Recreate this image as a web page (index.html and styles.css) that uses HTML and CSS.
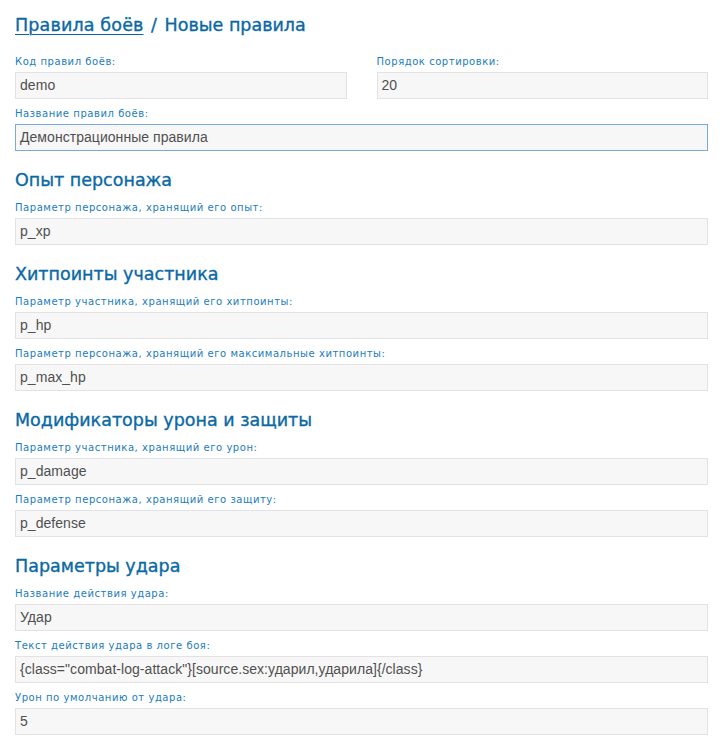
FILE: index.html
```html
<!DOCTYPE html>
<html lang="ru">
<head>
<meta charset="utf-8">
<title>Новые правила</title>
<link rel="stylesheet" href="styles.css">
</head>
<body>
<div class="page">
  <h1 class="title"><a href="#" class="crumb">Правила боёв</a> <span class="sep">/</span> Новые правила</h1>

  <div class="row">
    <div class="field">
      <label class="label">Код правил боёв:</label>
      <div class="input">demo</div>
    </div>
    <div class="field">
      <label class="label">Порядок сортировки:</label>
      <div class="input">20</div>
    </div>
  </div>
  <div class="field">
    <label class="label">Название правил боёв:</label>
    <div class="input focused">Демонстрационные правила</div>
  </div>

  <h2 class="section">Опыт персонажа</h2>
  <div class="field">
    <label class="label">Параметр персонажа, хранящий его опыт:</label>
    <div class="input">p_xp</div>
  </div>

  <h2 class="section">Хитпоинты участника</h2>
  <div class="field">
    <label class="label">Параметр участника, хранящий его хитпоинты:</label>
    <div class="input">p_hp</div>
  </div>
  <div class="field">
    <label class="label">Параметр персонажа, хранящий его максимальные хитпоинты:</label>
    <div class="input">p_max_hp</div>
  </div>

  <h2 class="section">Модификаторы урона и защиты</h2>
  <div class="field">
    <label class="label">Параметр участника, хранящий его урон:</label>
    <div class="input">p_damage</div>
  </div>
  <div class="field">
    <label class="label">Параметр персонажа, хранящий его защиту:</label>
    <div class="input">p_defense</div>
  </div>

  <h2 class="section">Параметры удара</h2>
  <div class="field">
    <label class="label">Название действия удара:</label>
    <div class="input">Удар</div>
  </div>
  <div class="field">
    <label class="label">Текст действия удара в логе боя:</label>
    <div class="input">{class="combat-log-attack"}[source.sex:ударил,ударила]{/class}</div>
  </div>
  <div class="field">
    <label class="label">Урон по умолчанию от удара:</label>
    <div class="input">5</div>
  </div>
</div>
</body>
</html>
```

FILE: styles.css
```css
html, body {
  margin: 0;
  padding: 0;
  background: #ffffff;
}

.page {
  padding: 13px 12px 0 15px;
  font-family: "DejaVu Sans", Verdana, sans-serif;
}

.title,
.section {
  font-family: "DejaVu Sans", Verdana, sans-serif;
  font-size: 17.5px;
  font-weight: normal;
  line-height: 24px;
  color: #0a69a4;
  -webkit-text-stroke: 0.35px #0a69a4;
  margin: 0;
}

.title {
  margin-bottom: 18px;
}

.crumb {
  color: #0a69a4;
  text-decoration: underline;
  text-decoration-thickness: 1px;
  text-underline-offset: 3px;
  letter-spacing: 0.15px;
}

.sep {
  margin: 0 2px;
}

.section {
  margin-top: 17px;
  margin-bottom: 9px;
}

.row {
  display: grid;
  grid-template-columns: 1fr 1fr;
  column-gap: 30px;
}

.field {
  display: flex;
  flex-direction: column;
  margin-bottom: 8px;
}

.label {
  font-size: 10px;
  line-height: 14px;
  letter-spacing: 0.55px;
  color: #1a7cbd;
  margin-bottom: 3px;
}

.input {
  box-sizing: border-box;
  height: 27px;
  line-height: 25px;
  padding: 0 4px;
  border: 1px solid #e2e2e2;
  background: #f7f7f7;
  font-family: "Liberation Sans", Arial, sans-serif;
  font-size: 14px;
  letter-spacing: 0.05px;
  color: #505050;
  white-space: nowrap;
  overflow: hidden;
}

.input.focused {
  border-color: #7aa9dc;
}
```
